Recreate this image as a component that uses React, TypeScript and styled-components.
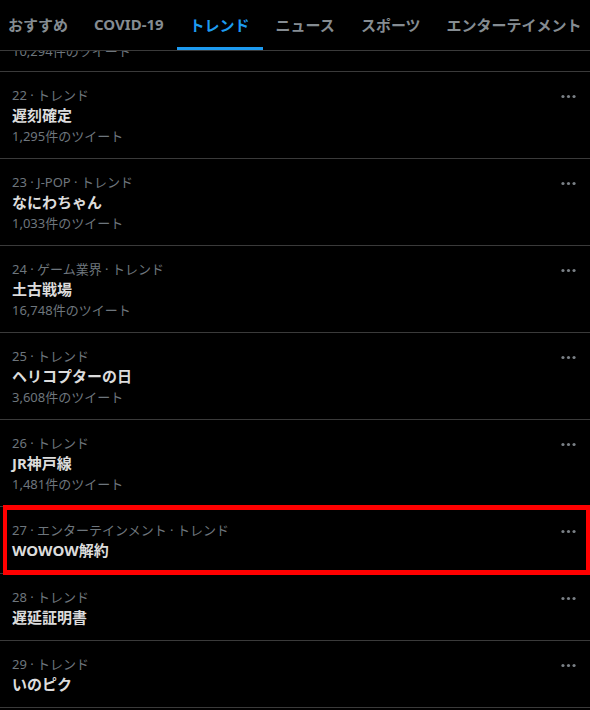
import React from "react";
import styled, { createGlobalStyle, css } from "styled-components";

const GlobalStyle = createGlobalStyle`
  html, body {
    margin: 0;
    padding: 0;
    background: #000;
    overflow: hidden;
  }
  body {
    font-family: "Noto Sans", "Noto Sans CJK JP", sans-serif;
    color: #d9d9d9;
  }
`;

const Page = styled.div`
  width: 590px;
  height: 710px;
  background: #000;
  display: flex;
  flex-direction: column;
  overflow: hidden;
`;

const Header = styled.div`
  height: 50px;
  border-bottom: 1px solid #3a3a3a;
  flex-shrink: 0;
  overflow: hidden;
`;

const TabList = styled.div`
  display: flex;
  margin-left: -5px;
  height: 50px;
`;

const Tab = styled.div<{ $active?: boolean }>`
  position: relative;
  display: flex;
  align-items: center;
  padding: 0 13px 2px;
  height: 50px;
  box-sizing: border-box;
  font-size: 15px;
  font-weight: 700;
  white-space: nowrap;
  color: #858c92;
  ${(p) =>
    p.$active &&
    css`
      color: #1d9bf0;
      &::after {
        content: "";
        position: absolute;
        left: 0;
        right: 0;
        bottom: 0;
        height: 3px;
        background: #1d9bf0;
      }
    `}
`;

const List = styled.div`
  display: flex;
  flex-direction: column;
`;

const PartialRow = styled.div`
  height: 20px;
  overflow: hidden;
  display: flex;
  flex-direction: column;
  justify-content: flex-end;
  padding: 0 12px 0;
  border-bottom: 1px solid #3a3a3a;
  flex-shrink: 0;
`;

const Row = styled.div<{ $highlight?: boolean }>`
  position: relative;
  display: grid;
  grid-template-columns: 1fr auto;
  padding: 13px 12px 12px;
  border-bottom: 1px solid #3a3a3a;
  flex-shrink: 0;
  ${(p) =>
    p.$highlight &&
    css`
      &::after {
        content: "";
        position: absolute;
        left: 3px;
        right: 0;
        top: -2px;
        bottom: -2px;
        border: 5px solid #ff0000;
        border-left-width: 4px;
        border-right-width: 4px;
        pointer-events: none;
      }
    `}
`;

const Info = styled.div`
  display: flex;
  flex-direction: column;
  min-width: 0;
`;

const Meta = styled.div`
  font-size: 13px;
  line-height: 20px;
  color: #6e767d;
  white-space: nowrap;
`;

const Title = styled.div`
  font-size: 15px;
  line-height: 21px;
  font-weight: 700;
  color: #dcdcdc;
  white-space: nowrap;
`;

const Count = styled.div<{ $clipped?: boolean }>`
  font-size: 13px;
  line-height: 19px;
  margin-top: 1px;
  color: #6e767d;
  white-space: nowrap;
  ${(p) => p.$clipped && css`margin-bottom: 10px;`}
`;

const MoreButton = styled.div`
  height: 20px;
  margin-top: 1px;
  display: flex;
  align-items: center;
  color: #7a8086;
`;

const MoreIcon = () => (
  <svg width="19" height="19" viewBox="0 0 24 24" fill="currentColor">
    <circle cx="5" cy="12" r="2" />
    <circle cx="12" cy="12" r="2" />
    <circle cx="19" cy="12" r="2" />
  </svg>
);

type Trend = {
  meta: string;
  title: string;
  count?: string;
  highlight?: boolean;
};

const tabs = ["おすすめ", "COVID-19", "トレンド", "ニュース", "スポーツ", "エンターテイメント"];

const trends: Trend[] = [
  { meta: "22 · トレンド", title: "遅刻確定", count: "1,295件のツイート" },
  { meta: "23 · J-POP · トレンド", title: "なにわちゃん", count: "1,033件のツイート" },
  { meta: "24 · ゲーム業界 · トレンド", title: "土古戦場", count: "16,748件のツイート" },
  { meta: "25 · トレンド", title: "ヘリコプターの日", count: "3,608件のツイート" },
  { meta: "26 · トレンド", title: "JR神戸線", count: "1,481件のツイート" },
  { meta: "27 · エンターテインメント · トレンド", title: "WOWOW解約", highlight: true },
  { meta: "28 · トレンド", title: "遅延証明書" },
  { meta: "29 · トレンド", title: "いのピク" },
];

export default function App() {
  return (
    <>
      <GlobalStyle />
      <Page>
        <Header>
          <TabList>
            {tabs.map((t) => (
              <Tab key={t} $active={t === "トレンド"}>
                {t}
              </Tab>
            ))}
          </TabList>
        </Header>
        <List>
          <PartialRow>
            <Count $clipped>10,294件のツイート</Count>
          </PartialRow>
          {trends.map((t) => (
            <Row key={t.meta} $highlight={t.highlight}>
              <Info>
                <Meta>{t.meta}</Meta>
                <Title>{t.title}</Title>
                {t.count && <Count>{t.count}</Count>}
              </Info>
              <MoreButton>
                <MoreIcon />
              </MoreButton>
            </Row>
          ))}
        </List>
      </Page>
    </>
  );
}
